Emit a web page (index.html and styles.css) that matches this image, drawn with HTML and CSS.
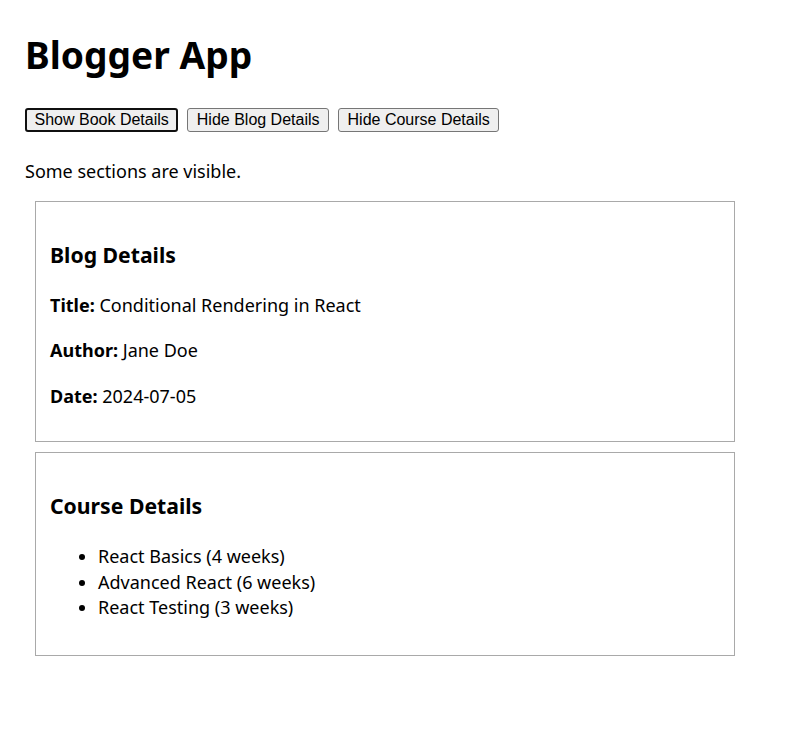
FILE: index.html
```html
<!DOCTYPE html>
<html lang="en">
<head>
<meta charset="utf-8">
<title>Blogger App</title>
<link rel="stylesheet" href="styles.css">
</head>
<body>
<div class="app">
  <h1 class="app-title">Blogger App</h1>
  <div class="controls">
    <button class="btn btn-focused">Show Book Details</button>
    <button class="btn">Hide Blog Details</button>
    <button class="btn">Hide Course Details</button>
  </div>
  <p class="status">Some sections are visible.</p>
  <section class="card">
    <h3 class="card-title">Blog Details</h3>
    <p class="field"><strong>Title:</strong> Conditional Rendering in React</p>
    <p class="field"><strong>Author:</strong> Jane Doe</p>
    <p class="field"><strong>Date:</strong> 2024-07-05</p>
  </section>
  <section class="card">
    <h3 class="card-title">Course Details</h3>
    <ul class="course-list">
      <li>React Basics (4 weeks)</li>
      <li>Advanced React (6 weeks)</li>
      <li>React Testing (3 weeks)</li>
    </ul>
  </section>
</div>
</body>
</html>
```

FILE: styles.css
```css
html, body {
  margin: 0;
  padding: 0;
  background: #ffffff;
}

body {
  font-family: "Noto Sans", "Open Sans", sans-serif;
  font-size: 18px;
  color: #000000;
}

.app {
  padding: 0 25px;
  display: flow-root;
}

.app-title {
  font-size: 37.2px;
  font-weight: 700;
  line-height: 51px;
  margin: 29px 0 0;
}

.controls {
  display: flex;
  gap: 9px;
  margin-top: 28px;
}

.btn {
  font-family: "Liberation Sans", Arial, sans-serif;
  font-size: 16px;
  line-height: 18px;
  color: #000000;
  background: #efefef;
  border: 1px solid #767676;
  border-radius: 3px;
  padding: 2px 8.5px;
  margin: 0;
}

.btn-focused {
  border: 2px solid #101010;
  padding: 1px 7.5px;
}

.status {
  margin: 26.5px 0 16.5px;
  line-height: 25.5px;
}

.card {
  box-sizing: border-box;
  width: 700px;
  margin: 10px 0 10px 10px;
  border: 1px solid #a9a9a9;
  padding: 15px 14px 12px;
}

.card-title {
  font-size: 21.2px;
  font-weight: 700;
  line-height: 30px;
  margin: 23px 0 22px;
}

.field {
  line-height: 26px;
  margin: 19.8px 0;
}

.course-list {
  margin: 23.5px 0 22.5px;
  padding-left: 48px;
  line-height: 25.5px;
}
```
